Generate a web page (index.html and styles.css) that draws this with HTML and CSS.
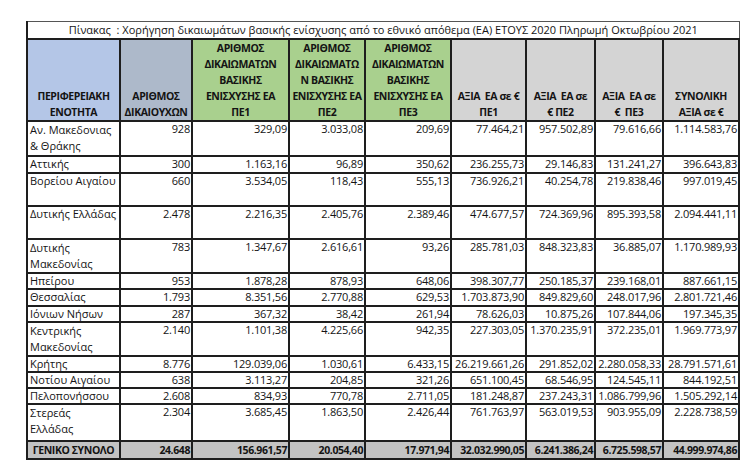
FILE: index.html
```html
<!DOCTYPE html>
<html lang="el">
<head>
<meta charset="utf-8">
<link rel="stylesheet" href="styles.css">
</head>
<body>
<div class="page">
<table class="sheet">
  <colgroup>
    <col class="c1"><col class="c2"><col class="c3"><col class="c4"><col class="c5"><col class="c6"><col class="c7"><col class="c8"><col class="c9">
  </colgroup>
  <tr class="r-title"><td class="title" colspan="9">Πίνακας&nbsp; : Χορήγηση δικαιωμάτων βασικής ενίσχυσης από το εθνικό απόθεμα (ΕΑ) ΕΤΟΥΣ 2020 Πληρωμή Οκτωβρίου 2021</td></tr>
  <tr class="r-head">
    <th class="h-blue">ΠΕΡΙΦΕΡΕΙΑΚΗ<br>ΕΝΟΤΗΤΑ</th>
    <th class="h-slate">ΑΡΙΘΜΟΣ<br>ΔΙΚΑΙΟΥΧΩΝ</th>
    <th class="h-green">ΑΡΙΘΜΟΣ<br>ΔΙΚΑΙΩΜΑΤΩΝ<br>ΒΑΣΙΚΗΣ<br>ΕΝΙΣΧΥΣΗΣ ΕΑ<br>ΠΕ1</th>
    <th class="h-green">ΑΡΙΘΜΟΣ<br>ΔΙΚΑΙΩΜΑΤΩ<br>Ν ΒΑΣΙΚΗΣ<br>ΕΝΙΣΧΥΣΗΣ ΕΑ<br>ΠΕ2</th>
    <th class="h-green">ΑΡΙΘΜΟΣ<br>ΔΙΚΑΙΩΜΑΤΩΝ<br>ΒΑΣΙΚΗΣ<br>ΕΝΙΣΧΥΣΗΣ ΕΑ<br>ΠΕ3</th>
    <th class="h-gray">ΑΞΙΑ&nbsp; ΕΑ σε €<br>ΠΕ1</th>
    <th class="h-gray">ΑΞΙΑ&nbsp; ΕΑ σε<br>€ ΠΕ2</th>
    <th class="h-gray">ΑΞΙΑ&nbsp; ΕΑ σε<br>€&nbsp; ΠΕ3</th>
    <th class="h-gray">ΣΥΝΟΛΙΚΗ<br>ΑΞΙΑ σε €</th>
  </tr>
  <tr class="r-35"><td class="name two">Αν. Μακεδονιας<br>&amp; Θράκης</td><td>928</td><td>329,09</td><td>3.033,08</td><td>209,69</td><td>77.464,21</td><td>957.502,89</td><td>79.616,66</td><td>1.114.583,76</td></tr>
  <tr class="r-17"><td class="name">Αττικής</td><td>300</td><td>1.163,16</td><td>96,89</td><td>350,62</td><td>236.255,73</td><td>29.146,83</td><td>131.241,27</td><td>396.643,83</td></tr>
  <tr class="r-33"><td class="name">Βορείου Αιγαίου</td><td>660</td><td>3.534,05</td><td>118,43</td><td>555,13</td><td>736.926,21</td><td>40.254,78</td><td>219.838,46</td><td>997.019,45</td></tr>
  <tr class="r-33"><td class="name">Δυτικής Ελλάδας</td><td>2.478</td><td>2.216,35</td><td>2.405,76</td><td>2.389,46</td><td>474.677,57</td><td>724.369,96</td><td>895.393,58</td><td>2.094.441,11</td></tr>
  <tr class="r-34"><td class="name two">Δυτικής<br>Μακεδονίας</td><td>783</td><td>1.347,67</td><td>2.616,61</td><td>93,26</td><td>285.781,03</td><td>848.323,83</td><td>36.885,07</td><td>1.170.989,93</td></tr>
  <tr class="r-16"><td class="name">Ηπείρου</td><td>953</td><td>1.878,28</td><td>878,93</td><td>648,06</td><td>398.307,77</td><td>250.185,37</td><td>239.168,01</td><td>887.661,15</td></tr>
  <tr class="r-17"><td class="name">Θεσσαλίας</td><td>1.793</td><td>8.351,56</td><td>2.770,88</td><td>629,53</td><td>1.703.873,90</td><td>849.829,60</td><td>248.017,96</td><td>2.801.721,46</td></tr>
  <tr class="r-16"><td class="name">Ιόνιων Νήσων</td><td>287</td><td>367,32</td><td>38,42</td><td>261,94</td><td>78.626,03</td><td>10.875,26</td><td>107.844,06</td><td>197.345,35</td></tr>
  <tr class="r-32"><td class="name two">Κεντρικής<br>Μακεδονίας</td><td>2.140</td><td>1.101,38</td><td>4.225,66</td><td>942,35</td><td>227.303,05</td><td>1.370.235,91</td><td>372.235,01</td><td>1.969.773,97</td></tr>
  <tr class="r-16"><td class="name">Κρήτης</td><td>8.776</td><td>129.039,06</td><td>1.030,61</td><td>6.433,15</td><td>26.219.661,26</td><td>291.852,02</td><td>2.280.058,33</td><td>28.791.571,61</td></tr>
  <tr class="r-16"><td class="name">Νοτίου Αιγαίου</td><td>638</td><td>3.113,27</td><td>204,85</td><td>321,26</td><td>651.100,45</td><td>68.546,95</td><td>124.545,11</td><td>844.192,51</td></tr>
  <tr class="r-15"><td class="name">Πελοπονήσσου</td><td>2.608</td><td>834,93</td><td>770,78</td><td>2.711,05</td><td>181.248,87</td><td>237.243,31</td><td>1.086.799,96</td><td>1.505.292,14</td></tr>
  <tr class="r-37"><td class="name two">Στερεάς<br>Ελλάδας</td><td>2.304</td><td>3.685,45</td><td>1.863,50</td><td>2.426,44</td><td>761.763,97</td><td>563.019,53</td><td>903.955,09</td><td>2.228.738,59</td></tr>
  <tr class="r-total"><td class="name">ΓΕΝΙΚΟ ΣΥΝΟΛΟ</td><td>24.648</td><td>156.961,57</td><td>20.054,40</td><td>17.971,94</td><td>32.032.990,05</td><td>6.241.386,24</td><td>6.725.598,57</td><td>44.999.974,86</td></tr>
</table>
</div>
</body>
</html>
```

FILE: styles.css
```css
html, body {
  margin: 0;
  padding: 0;
  background: #ffffff;
}

.page {
  padding: 21px 0 0 26px;
}

.sheet {
  border-collapse: collapse;
  table-layout: fixed;
  width: 712px;
  font-family: "Open Sans", "Noto Sans", sans-serif;
  font-size: 11px;
  line-height: 14px;
  color: #141414;
}

.c1 { width: 93px; }
.c2 { width: 72px; }
.c3 { width: 97px; }
.c4 { width: 76px; }
.c5 { width: 86px; }
.c6 { width: 75px; }
.c7 { width: 69px; }
.c8 { width: 68px; }
.c9 { width: 76px; }

.sheet td,
.sheet th {
  border: 2px solid #1e1e1e;
  padding: 0 2px;
  white-space: nowrap;
  overflow: hidden;
}

.sheet td {
  text-align: right;
  vertical-align: top;
  letter-spacing: -0.2px;
  padding-right: 1px;
}

.sheet td.name {
  text-align: left;
  letter-spacing: 0;
  padding: 0 2px;
}

.sheet td.two {
  line-height: 16px;
}

.sheet th {
  font-weight: 700;
  font-size: 10.5px;
  letter-spacing: -0.4px;
  line-height: 16px;
  padding: 0 1px;
  text-align: center;
  vertical-align: bottom;
}

.r-title { height: 17px; }
.sheet td.title {
  text-align: center;
  vertical-align: middle;
  letter-spacing: 0;
  padding: 0 2px;
  border-top-width: 1px;
  border-top-color: #555;
  border-right-color: #555;
  border-right-width: 1px;
  line-height: 14px;
}

.r-head { height: 82px; }
.h-blue { background: #b4c6e7; }
.h-slate { background: #adb9ca; }
.h-green { background: #a9d08e; }
.h-gray { background: #d4d4d4; }

.r-15 { height: 15px; }
.r-16 { height: 16px; }
.r-17 { height: 17px; }
.r-32 { height: 32px; }
.r-33 { height: 33px; }
.r-34 { height: 34px; }
.r-35 { height: 35px; }
.r-37 { height: 37px; }

.r-total { height: 18px; }
.r-total td {
  background: #c3c3c3;
  font-weight: 700;
  font-size: 10.5px;
  letter-spacing: -0.4px;
  vertical-align: middle;
}
.r-total td.name {
  text-align: center;
  letter-spacing: -0.4px;
}
```
